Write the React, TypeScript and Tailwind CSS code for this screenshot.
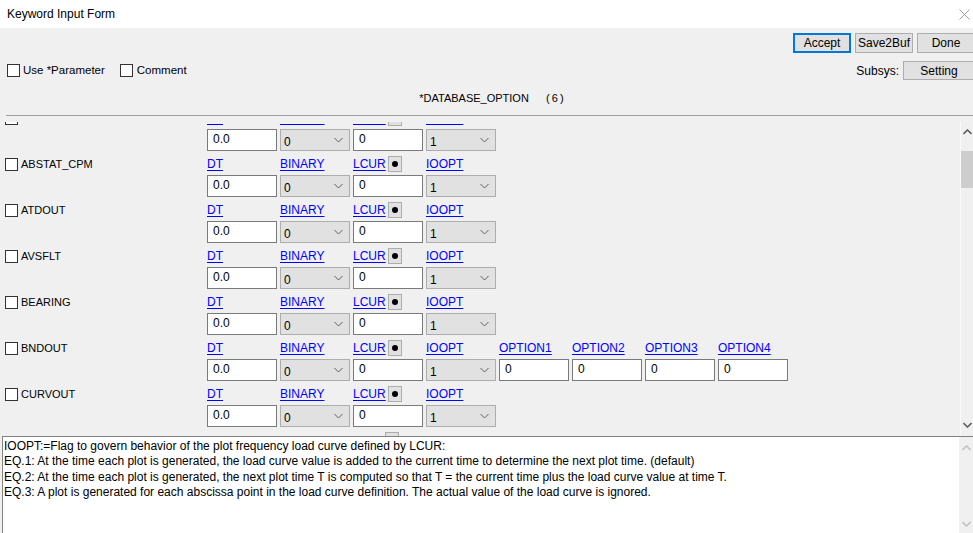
import React from "react";

const rows = [
  { name: "", options: false },
  { name: "ABSTAT_CPM", options: false },
  { name: "ATDOUT", options: false },
  { name: "AVSFLT", options: false },
  { name: "BEARING", options: false },
  { name: "BNDOUT", options: true },
  { name: "CURVOUT", options: false },
];

const help = [
  "IOOPT:=Flag to govern behavior of the plot frequency load curve defined by LCUR:",
  "EQ.1: At the time each plot is generated, the load curve value is added to the current time to determine the next plot time. (default)",
  "EQ.2: At the time each plot is generated, the next plot time T is computed so that T = the current time plus the load curve value at time T.",
  "EQ.3: A plot is generated for each abscissa point in the load curve definition. The actual value of the load curve is ignored.",
];

function Chevron({ up = false, color = "#606060", bold = false }: { up?: boolean; color?: string; bold?: boolean }) {
  return (
    <svg width="9" height="6" viewBox="0 0 9 6" className="block">
      <polyline
        points={up ? "0.5,5 4.5,1 8.5,5" : "0.5,1 4.5,5 8.5,1"}
        fill="none"
        stroke={color}
        strokeWidth={bold ? 1.6 : 1}
      />
    </svg>
  );
}

function Box({ className = "" }: { className?: string }) {
  return <span className={`block w-[13px] h-[13px] border border-[#333] bg-white shrink-0 ${className}`} />;
}

function Dot() {
  return (
    <span className="w-[14px] h-[16px] border border-[#adadad] bg-[#e1e1e1] flex items-center justify-center">
      <span className="w-[6px] h-[6px] rounded-full bg-black" />
    </span>
  );
}

function Field({ value }: { value: string }) {
  return (
    <div className="h-[22px] border border-[#7a7a7a] bg-white pl-[5px] leading-[18px] text-[12px]">{value}</div>
  );
}

function Select({ value }: { value: string }) {
  return (
    <div className="h-[22px] border border-[#adadad] bg-[#e1e1e1] pl-[3px] pr-[6px] flex items-center justify-between">
      <span className="pt-[3px] text-[12px]">{value}</span>
      <Chevron />
    </div>
  );
}

function Head({ label, dot = false }: { label: string; dot?: boolean }) {
  return (
    <div className="h-[19px] flex items-start gap-[2px]">
      <span className="leading-[16px] text-[12px] text-[#0000ff] underline underline-offset-[2px]">{label}</span>
      {dot && <Dot />}
    </div>
  );
}

function Row({ name, options }: { name: string; options: boolean }) {
  return (
    <div className="h-[46px] flex">
      <div className="w-[207px] pl-[5px] pt-[2px] flex items-start gap-[3px]">
        <Box />
        <span className="leading-[13px] text-[11px]">{name}</span>
      </div>
      <div className="flex gap-[3px]">
        <div className="w-[70px]">
          <Head label="DT" />
          <Field value="0.0" />
        </div>
        <div className="w-[70px]">
          <Head label="BINARY" />
          <Select value="0" />
        </div>
        <div className="w-[70px]">
          <Head label="LCUR" dot />
          <Field value="0" />
        </div>
        <div className="w-[70px]">
          <Head label="IOOPT" />
          <Select value="1" />
        </div>
        {options &&
          ["OPTION1", "OPTION2", "OPTION3", "OPTION4"].map((o) => (
            <div key={o} className="w-[70px]">
              <Head label={o} />
              <Field value="0" />
            </div>
          ))}
      </div>
    </div>
  );
}

export default function App() {
  return (
    <div className="w-[973px] h-[533px] overflow-hidden bg-[#f0f0f0] flex flex-col text-[12px] text-black font-['Liberation_Sans',Arial,sans-serif]">
      <div className="h-[28px] shrink-0 bg-white flex items-center justify-between pl-[7px] pr-[3px]">
        <span className="text-[12px]">Keyword Input Form</span>
        <svg width="11" height="11" viewBox="0 0 11 11">
          <path d="M0.5 0.5 L10.5 10.5 M10.5 0.5 L0.5 10.5" stroke="#a0a0a0" strokeWidth="1" />
        </svg>
      </div>

      <div className="shrink-0 h-[88px] flex flex-col">
        <div className="mt-[5px] h-[20px] flex justify-end gap-[4px] mr-[-2px]">
          <button className="w-[58px] h-[20px] border-2 border-[#0078d7] bg-[#e1e1e1] text-[12px] leading-none">Accept</button>
          <button className="w-[58px] h-[20px] border border-[#adadad] bg-[#e1e1e1] text-[12px] leading-none">Save2Buf</button>
          <button className="w-[58px] h-[20px] border border-[#adadad] bg-[#e1e1e1] text-[12px] leading-none">Done</button>
        </div>
        <div className="mt-[8px] h-[19px] flex justify-between items-center mr-[-2px]">
          <div className="flex items-center pl-[7px] text-[11.5px]">
            <Box />
            <span className="ml-[3px]">Use *Parameter</span>
            <Box className="ml-[15px]" />
            <span className="ml-[4px]">Comment</span>
          </div>
          <div className="flex items-center gap-[4px] h-full">
            <span>Subsys:</span>
            <button className="w-[72px] h-[19px] border border-[#adadad] bg-[#e1e1e1] text-[12px] leading-none">Setting</button>
          </div>
        </div>
        <div className="mt-[10px] h-[16px] leading-[16px] flex justify-center pl-[10px] text-[11px]">
          <span>*DATABASE_OPTION</span>
          <span className="ml-[17px]">(&thinsp;6&thinsp;)</span>
        </div>
        <div className="mt-auto ml-[6px] border-t border-[#a0a0a0]" />
      </div>

      <div className="mt-[6px] h-[314px] shrink-0 flex">
        <div className="flex-1 overflow-hidden">
          <div className="-mt-[12px]">
            {rows.map((r, i) => (
              <Row key={i} name={r.name} options={r.options} />
            ))}
            {/* next row, only its LCUR button peeks in above the help box */}
            <div className="h-[4px] overflow-hidden pl-[385px]">
              <Dot />
            </div>
          </div>
        </div>
        <div className="w-[13px] border-l border-[#fafafa] bg-[#f0f0f0] flex flex-col items-center pt-[7px] pb-[8px]">
          <div className="pl-[1px]">
            <Chevron up bold />
          </div>
          <div className="mt-[16px] w-full h-[37px] bg-[#cdcdcd]" />
          <div className="mt-auto pl-[1px]">
            <Chevron bold />
          </div>
        </div>
      </div>

      <div className="flex-1 ml-[2px] border-l border-t border-[#828282] bg-white flex">
        <div className="flex-1 pl-[1px] pt-[2px] leading-[15.33px] text-[12px] whitespace-nowrap overflow-hidden">
          {help.map((l) => (
            <div key={l}>{l}</div>
          ))}
        </div>
        <div className="w-[14px] bg-[#f0f0f0] flex flex-col items-center pt-[8px] pb-[6px]">
          <Chevron up color="#c2c2c2" bold />
          <div className="mt-auto">
            <Chevron color="#c2c2c2" bold />
          </div>
        </div>
      </div>
    </div>
  );
}
